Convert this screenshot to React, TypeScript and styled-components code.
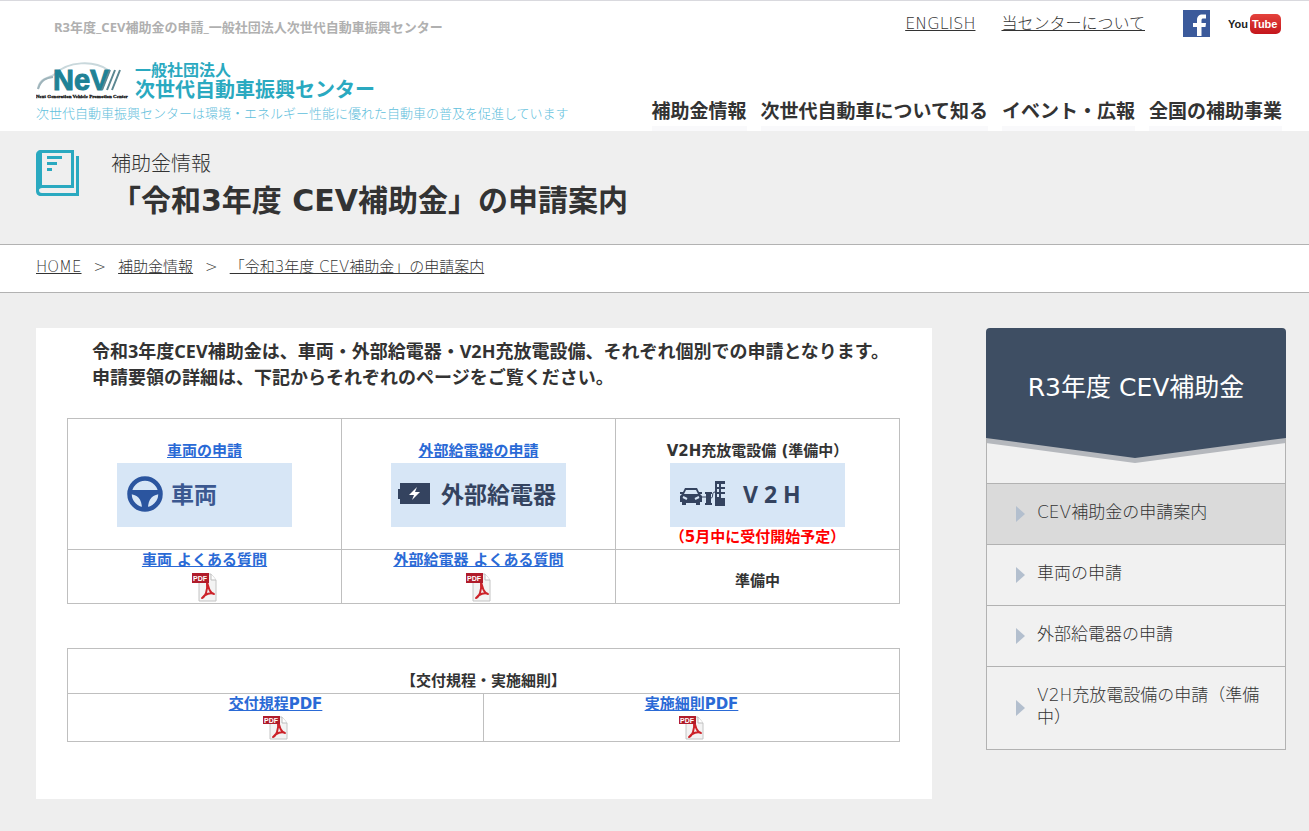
import React from "react";
import styled, { createGlobalStyle } from "styled-components";

const wide = `"DejaVu Sans", "Noto Sans CJK JP", sans-serif`;
const compact = `"Noto Sans", "Noto Sans CJK JP", sans-serif`;
const rule = "#b2b2b2";
const teal = "#2aa9c0";

const GlobalStyle = createGlobalStyle`
  *, *::before, *::after { box-sizing: border-box; }
  body {
    margin: 0;
    background: #eeeeee;
    color: #333333;
    font-family: ${wide};
    font-size: 15px;
    font-weight: 300;
  }
  h1, h2, p, ul, ol { margin: 0; padding: 0; }
  ul, ol { list-style: none; }
  a { color: inherit; }
  svg { display: block; flex: none; }
`;

/* ---------- header ---------- */

const Header = styled.header`
  display: flex;
  justify-content: space-between;
  min-height: 131px;
  padding: 0 27px 0 36px;
  background: #ffffff;
  border-top: 1px solid #d9d9de;
`;

const Brand = styled.div`
  display: flex;
  flex-direction: column;
  padding-top: 16px;
`;

const SiteTitle = styled.p`
  padding-left: 18px;
  color: #b0b0b0;
  font: bold 13px/20px ${compact};
`;

const LogoLink = styled.a`
  display: flex;
  align-items: center;
  gap: 5px;
  height: 38px;
  margin-top: 25px;
  color: ${teal};
  text-decoration: none;
`;

const LogoName = styled.span`
  display: flex;
  flex-direction: column;
  padding-top: 2px;
  font-weight: bold;
`;

const LogoSmall = styled.span`
  font-size: 16px;
  line-height: 16px;
`;

const LogoLarge = styled.span`
  font-size: 20px;
  line-height: 22px;
`;

const Tagline = styled.p`
  margin-top: 4px;
  color: #5fc0dc;
  font-size: 13px;
  line-height: 20px;
`;

const HeaderSide = styled.div`
  display: flex;
  flex-direction: column;
  justify-content: space-between;
  align-items: flex-end;
`;

const Utility = styled.ul`
  display: flex;
  align-items: center;
  padding-top: 9px;
  font-size: 16px;
  line-height: 24px;
`;

const UtilityItem = styled.li<{ $gap?: number }>`
  margin-left: ${(p) => p.$gap ?? 0}px;
  a { display: block; }
`;

const GlobalNav = styled.ul`
  display: flex;
  gap: 14px;
`;

const NavLink = styled.a`
  display: block;
  padding-bottom: 1px;
  border-bottom: 5px solid #f9f9fb;
  font-size: 19px;
  font-weight: bold;
  line-height: 28px;
  text-decoration: none;
`;

/* ---------- page heading and breadcrumb ---------- */

const PageHead = styled.div`
  display: flex;
  gap: 31px;
  padding: 19px 36px 20px;
  background: #efefef;
  border-bottom: 1px solid ${rule};
`;

const Category = styled.p`
  font-size: 20px;
  line-height: 28px;
`;

const PageTitle = styled.h1`
  font-size: 30px;
  line-height: 46px;
`;

const Crumbs = styled.ol`
  display: flex;
  padding: 10px 36px 13px;
  background: #ffffff;
  border-bottom: 1px solid ${rule};
  line-height: 24px;
`;

const Crumb = styled.li`
  & + &::before {
    content: ">";
    padding: 0 12px;
  }
`;

/* ---------- content ---------- */

const Body = styled.div`
  display: flex;
  align-items: flex-start;
  gap: 54px;
  padding: 35px 23px 32px 36px;
`;

const Panel = styled.main`
  flex: 1;
  min-width: 0;
  padding: 10px 32px 57px 31px;
  background: #ffffff;
`;

const Intro = styled.p`
  padding-left: 25px;
  font: bold 18px/26px ${compact};
`;

const Grid = styled.table<{ $top: number }>`
  width: 100%;
  margin-top: ${(p) => p.$top}px;
  border-collapse: collapse;
  table-layout: fixed;
  font-weight: bold;
  text-align: center;
`;

const Cell = styled.td<{ $top?: number }>`
  padding: ${(p) => p.$top ?? 0}px 0 0;
  border: 1px solid #bfbfbf;
  vertical-align: top;
  line-height: 20px;
  a { color: #2a6ad6; }
`;

const HeadCell = styled.th`
  padding: 20px 0 0;
  border: 1px solid #bfbfbf;
  line-height: 24px;
`;

const CellTitle = styled.div`
  line-height: 24px;
`;

const Banner = styled.div<{ $color: string; $gap: number }>`
  display: flex;
  align-items: center;
  gap: ${(p) => p.$gap}px;
  width: 175px;
  height: 64px;
  margin: 0 auto;
  padding: 0 6px 3px;
  background: #d7e6f6;
  color: ${(p) => p.$color};
  font: bold 23px/32px ${compact};
`;

const BannerIcon = styled.span<{ $left?: number }>`
  margin-left: ${(p) => p.$left ?? 0}px;
`;

const Note = styled.div`
  padding-bottom: 2px;
  color: #ff0000;
`;

const PdfLink = styled.a<{ $space: number }>`
  display: block;
  svg { margin: ${(p) => p.$space}px auto 0; }
`;

/* ---------- side menu ---------- */

const Side = styled.nav`
  flex: none;
  width: 300px;
`;

const SideHead = styled.div`
  display: grid;
  height: 155px;
  > * { grid-area: 1 / 1; }
`;

const SideTitle = styled.h2`
  z-index: 1;
  padding-top: 42px;
  color: #ffffff;
  font-size: 25px;
  font-weight: normal;
  line-height: 36px;
  text-align: center;
`;

const SideList = styled.ul`
  border: 1px solid ${rule};
  background: #f1f1f1;
`;

const SideItem = styled.li<{ $current?: boolean }>`
  background: ${(p) => (p.$current ? "#dadada" : "#f1f1f1")};
  & + & { border-top: 1px solid ${rule}; }
`;

const SideLink = styled.a`
  display: flex;
  align-items: center;
  padding-left: 29px;
  font-size: 17px;
  line-height: 22px;
  text-decoration: none;
  svg { margin-right: 11px; }
  span { padding: 17px 20px 21px 0; }
`;

/* ---------- drawings ---------- */

const NevLogo = () => (
  <svg width="94" height="38" viewBox="0 0 94 38" aria-hidden="true">
    <path d="M2 27 C4 14 14 17 19 12 C32 -1 58 -2 72 8" fill="none" stroke="#c9d8dc" strokeWidth="2" />
    <path d="M2 27 C5 17 11 16 17 15" fill="none" stroke="#9fb4bb" strokeWidth="2" />
    <text x="17" y="28" fontFamily="Liberation Sans, sans-serif" fontWeight="bold" fontSize="29" fill="#1f8296" stroke="#1f8296">NeV</text>
    <path d="M66 28 L74 8 M71 28 L79 8 M76 28 L84 8" stroke="#5b8791" strokeWidth="2" />
    <text x="0" y="36" fontFamily="Liberation Serif, serif" fontWeight="bold" fontSize="5" fill="#111111" stroke="#111111" strokeWidth="0.3">Next Generation Vehicle Promotion Center</text>
  </svg>
);

const FacebookIcon = () => (
  <svg width="27" height="27" viewBox="0 0 27 27" aria-hidden="true">
    <rect width="27" height="27" fill="#3b5a9b" />
    <path d="M14 26 V17 H10 V13 H14 V10 C14 6.500 16 4.500 19.500 4.500 H23 V8.500 H20.500 C19 8.500 18.500 9 18.500 10.500 V13 H23 L22.500 17 H18.500 V26 Z" fill="#ffffff" />
  </svg>
);

const YouTubeIcon = () => (
  <svg width="54" height="25" viewBox="0 0 54 25" aria-hidden="true">
    <defs>
      <linearGradient id="tube" x1="0" y1="0" x2="0" y2="1">
        <stop offset="0" stopColor="#e4423c" />
        <stop offset="1" stopColor="#c4161c" />
      </linearGradient>
    </defs>
    <rect x="22" y="3" width="31" height="20" rx="5" fill="url(#tube)" />
    <g fontFamily="Liberation Sans, sans-serif" fontWeight="bold" fontSize="11">
      <text x="0" y="17" fill="#222222">You</text>
      <text x="24" y="17" fill="#ffffff">Tube</text>
    </g>
  </svg>
);

const BookIcon = () => (
  <svg width="44" height="47" viewBox="0 0 44 47" aria-hidden="true" fill={teal}>
    <path fillRule="evenodd" d="M5 0 H38 V38 H6 C4 38 3 39 3 40 C3 42 4 43 6 43 H40 V6 H43 V46 H5 C2 46 0 44 0 41 V5 C0 2 2 0 5 0 Z M6 3 V35 H35 V3 Z" />
    <path d="M11 6 H26 V9 H11 Z M11 12 H21 V15 H11 Z M11 18 H16 V21 H11 Z" />
  </svg>
);

const WheelIcon = () => (
  <svg width="36" height="36" viewBox="0 0 36 36" aria-hidden="true">
    <circle cx="18" cy="18" r="15.500" fill="none" stroke="#2b559f" strokeWidth="4.500" />
    <path d="M3 14 H33 V18 C26 19 21 22 21 33 H15 C15 22 10 19 3 18 Z" fill="#2b559f" />
  </svg>
);

const BatteryIcon = () => (
  <svg width="34" height="23" viewBox="0 0 34 23" aria-hidden="true">
    <path d="M3 1 H33 V22 H3 V17 H1 V7 H3 Z" fill="#34435f" />
    <path d="M20 5 L12 13 H17 L15 18 L23 10 H18 Z" fill="#ffffff" />
  </svg>
);

const CarChargeIcon = () => (
  <svg width="46" height="26" viewBox="0 0 46 26" aria-hidden="true">
    <g fill="#34435f">
      <path fillRule="evenodd" d="M5 7 H17 L20 13 L22 15 V21 H20 V24 H16 V22 H6 V24 H2 V21 H0 V15 L2 13 Z M6 9 L4 13 H18 L16 9 Z" />
      <path d="M0 11 H3 V13 H0 Z M19 11 H22 V13 H19 Z M25 11 H32 V13 H31 V22 H32 V24 H25 V22 H26 V13 H25 Z" />
      <path fillRule="evenodd" d="M35 0 H45 V3 H41 V6 H45 V8 H41 V11 H45 V13 H41 V17 H45 V25 H35 Z M37 3 V6 H39 V3 Z M37 8 V11 H39 V8 Z M37 13 V16 H39 V13 Z" />
    </g>
    <path d="M3 16 L7 18 M19 16 L15 18" stroke="#d7e6f6" strokeWidth="2" />
    <path d="M31 17 C34 17 31 11 35 11 M22 16 H26" fill="none" stroke="#34435f" />
  </svg>
);

const PdfIcon = ({ height = 30 }: { height?: number }) => (
  <svg width="25" height={height} viewBox={`0 0 25 ${height}`} aria-hidden="true">
    <path d={`M7 1 H19 L24 7 V${height - 2} H7 Z`} fill="#f3f3f3" stroke="#c4c4c4" />
    <path d="M19 1 V7 H24" fill="#ffffff" stroke="#bdbdbd" />
    <path
      transform={`translate(0 ${height > 26 ? 0 : -4})`}
      d="M15 9 C17 16 18 20 22 21 C19 19 13 21 10 25 C13 24 16 18 15 9 Z"
      fill="none"
      stroke="#cc2229"
      strokeWidth="2"
      strokeLinejoin="round"
    />
    <rect width="17" height={height > 26 ? 10 : 8} fill="#b01c2b" />
    <text x="1" y={height > 26 ? 8 : 7} fontFamily="Liberation Sans, sans-serif" fontWeight="bold" fontSize="7" fill="#ffffff">PDF</text>
  </svg>
);

const ArrowIcon = () => (
  <svg width="10" height="16" viewBox="0 0 10 16" aria-hidden="true">
    <path d="M0 0 L9 8 L0 16 Z" fill="#b3bfce" />
  </svg>
);

const SideShape = () => (
  <svg width="300" height="155" viewBox="0 0 300 155" aria-hidden="true">
    <rect y="100" width="300" height="55" fill="#f1f1f1" />
    <path d="M0 110 H300 V115 L149 135 L0 115 Z" fill="#b5b8bd" />
    <path d="M0 4 Q0 0 4 0 H296 Q300 0 300 4 V110 L149 130 L0 110 Z" fill="#3e4e63" />
    <path d="M0.500 111 V155 M299.500 111 V155" stroke={rule} />
  </svg>
);

/* ---------- page ---------- */

const navItems = ["補助金情報", "次世代自動車について知る", "イベント・広報", "全国の補助事業"];
const crumbs = ["HOME", "補助金情報", "「令和3年度 CEV補助金」の申請案内"];
const sideItems = ["CEV補助金の申請案内", "車両の申請", "外部給電器の申請", "V2H充放電設備の申請（準備中）"];

export default function App() {
  return (
    <>
      <GlobalStyle />
      <Header>
        <Brand>
          <SiteTitle>R3年度_CEV補助金の申請_一般社団法人次世代自動車振興センター</SiteTitle>
          <LogoLink href="#">
            <NevLogo />
            <LogoName>
              <LogoSmall>一般社団法人</LogoSmall>
              <LogoLarge>次世代自動車振興センター</LogoLarge>
            </LogoName>
          </LogoLink>
          <Tagline>次世代自動車振興センターは環境・エネルギー性能に優れた自動車の普及を促進しています</Tagline>
        </Brand>
        <HeaderSide>
          <Utility>
            <UtilityItem><a href="#">ENGLISH</a></UtilityItem>
            <UtilityItem $gap={26}><a href="#">当センターについて</a></UtilityItem>
            <UtilityItem $gap={38}><a href="#" aria-label="Facebook"><FacebookIcon /></a></UtilityItem>
            <UtilityItem $gap={18}><a href="#" aria-label="YouTube"><YouTubeIcon /></a></UtilityItem>
          </Utility>
          <nav>
            <GlobalNav>
              {navItems.map((label) => (
                <li key={label}><NavLink href="#">{label}</NavLink></li>
              ))}
            </GlobalNav>
          </nav>
        </HeaderSide>
      </Header>

      <PageHead>
        <BookIcon />
        <div>
          <Category>補助金情報</Category>
          <PageTitle>「令和3年度 CEV補助金」の申請案内</PageTitle>
        </div>
      </PageHead>

      <Crumbs>
        {crumbs.map((label) => (
          <Crumb key={label}><a href="#">{label}</a></Crumb>
        ))}
      </Crumbs>

      <Body>
        <Panel>
          <Intro>
            令和3年度CEV補助金は、車両・外部給電器・V2H充放電設備、それぞれ個別での申請となります。
            <br />
            申請要領の詳細は、下記からそれぞれのページをご覧ください。
          </Intro>

          <Grid $top={28}>
            <colgroup>
              <col width="274" />
              <col width="274" />
              <col />
            </colgroup>
            <tbody>
              <tr>
                <Cell $top={20}>
                  <CellTitle><a href="#">車両の申請</a></CellTitle>
                  <Banner $color="#3b5890" $gap={8}>
                    <BannerIcon $left={4}><WheelIcon /></BannerIcon>車両
                  </Banner>
                </Cell>
                <Cell $top={20}>
                  <CellTitle><a href="#">外部給電器の申請</a></CellTitle>
                  <Banner $color="#34435f" $gap={10}>
                    <BannerIcon><BatteryIcon /></BannerIcon>外部給電器
                  </Banner>
                </Cell>
                <Cell $top={20}>
                  <CellTitle>V2H充放電設備 (準備中）</CellTitle>
                  <Banner $color="#34435f" $gap={17}>
                    <BannerIcon $left={4}><CarChargeIcon /></BannerIcon>V 2 H
                  </Banner>
                  <Note>（5月中に受付開始予定）</Note>
                </Cell>
              </tr>
              <tr>
                <Cell>
                  <PdfLink href="#" $space={3}>車両 よくある質問<PdfIcon /></PdfLink>
                </Cell>
                <Cell>
                  <PdfLink href="#" $space={3}>外部給電器 よくある質問<PdfIcon /></PdfLink>
                </Cell>
                <Cell $top={21}>準備中</Cell>
              </tr>
            </tbody>
          </Grid>

          <Grid $top={44}>
            <thead>
              <tr><HeadCell colSpan={2}>【交付規程・実施細則】</HeadCell></tr>
            </thead>
            <tbody>
              <tr>
                <Cell><PdfLink href="#" $space={2}>交付規程PDF<PdfIcon height={25} /></PdfLink></Cell>
                <Cell><PdfLink href="#" $space={2}>実施細則PDF<PdfIcon height={25} /></PdfLink></Cell>
              </tr>
            </tbody>
          </Grid>
        </Panel>

        <Side>
          <SideHead>
            <SideShape />
            <SideTitle>R3年度 CEV補助金</SideTitle>
          </SideHead>
          <SideList>
            {sideItems.map((label, i) => (
              <SideItem key={label} $current={i === 0}>
                <SideLink href="#"><ArrowIcon /><span>{label}</span></SideLink>
              </SideItem>
            ))}
          </SideList>
        </Side>
      </Body>
    </>
  );
}
